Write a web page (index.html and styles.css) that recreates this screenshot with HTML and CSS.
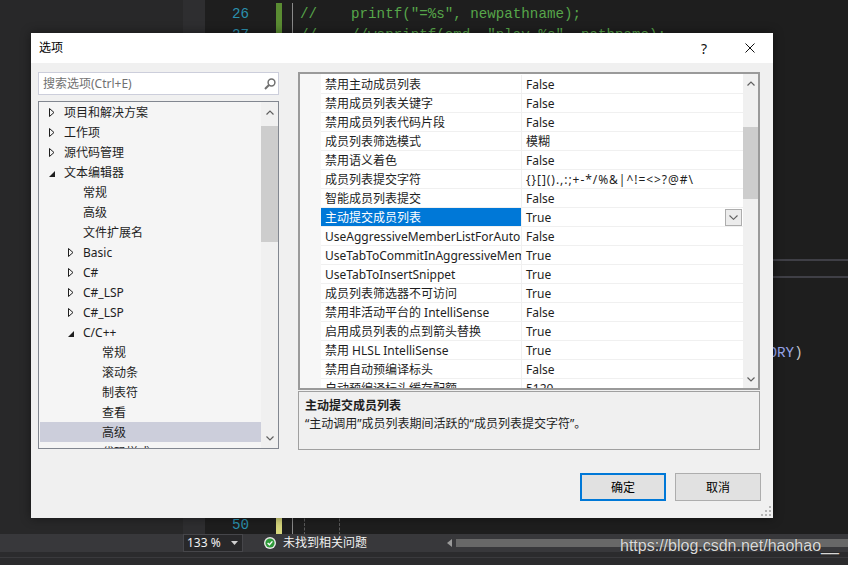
FILE: index.html
```html
<!DOCTYPE html>
<html>
<head>
<meta charset="utf-8">
<link rel="stylesheet" href="styles.css">
</head>
<body>
<div class="ide">
  <div class="editor">
    <div class="side"></div>
    <div class="strip"></div>
    <div class="lines">
      <div class="row"><span class="ln">26</span><span class="chg add"></span><span class="code cm">//    printf("=%s", newpathname);</span></div>
      <div class="row"><span class="ln">27</span><span class="chg add"></span><span class="code cm">//    //wsprintf(cmd, "play %s", pathname);</span></div>
      <div class="row"><span class="ln">28</span><span class="chg"></span><span class="code"></span></div>
      <div class="row"><span class="ln">29</span><span class="chg"></span><span class="code"></span></div>
      <div class="row"><span class="ln">30</span><span class="chg"></span><span class="code"></span></div>
      <div class="row"><span class="ln">31</span><span class="chg"></span><span class="code"></span></div>
      <div class="row"><span class="ln">32</span><span class="chg"></span><span class="code"></span></div>
      <div class="row"><span class="ln">33</span><span class="chg"></span><span class="code"></span></div>
      <div class="row"><span class="ln">34</span><span class="chg"></span><span class="code"></span></div>
      <div class="row"><span class="ln">35</span><span class="chg"></span><span class="code"></span></div>
      <div class="row"><span class="ln">36</span><span class="chg"></span><span class="code"></span></div>
      <div class="row"><span class="ln">37</span><span class="chg"></span><span class="code"></span></div>
      <div class="row"><span class="ln">38</span><span class="chg"></span><span class="code band"></span></div>
      <div class="row"><span class="ln">39</span><span class="chg"></span><span class="code"></span></div>
      <div class="row"><span class="ln">40</span><span class="chg"></span><span class="code"></span></div>
      <div class="row"><span class="ln">41</span><span class="chg"></span><span class="code"></span></div>
      <div class="row"><span class="ln">42</span><span class="chg"></span><span class="code up"><span class="pad"></span><span class="mac">ORY</span><span class="pun">)</span></span></div>
      <div class="row"><span class="ln">43</span><span class="chg"></span><span class="code"></span></div>
      <div class="row"><span class="ln">44</span><span class="chg"></span><span class="code"></span></div>
      <div class="row"><span class="ln">45</span><span class="chg"></span><span class="code"></span></div>
      <div class="row"><span class="ln">46</span><span class="chg"></span><span class="code"></span></div>
      <div class="row"><span class="ln">47</span><span class="chg"></span><span class="code"></span></div>
      <div class="row"><span class="ln">48</span><span class="chg"></span><span class="code"></span></div>
      <div class="row"><span class="ln">49</span><span class="chg"></span><span class="code"></span></div>
      <div class="row"><span class="ln">50</span><span class="chg mod"></span><span class="code"><span class="guide g1"></span><span class="guide"></span></span></div>
    </div>
  </div>
  <div class="status">
    <div class="zoombox"><span class="zv">133 %</span><svg class="zarrow" width="7" height="4" viewBox="0 0 7 4"><polygon points="0,0 7,0 3.5,4" fill="#d0d0d0"/></svg></div>
    <svg class="okicon" width="12" height="12" viewBox="0 0 12 12"><circle cx="6" cy="6" r="6" fill="#e8e8e8"/><circle cx="6" cy="6" r="4.6" fill="#2f9a3a"/><polyline points="3.6,6.1 5.4,7.8 8.4,4.4" fill="none" stroke="#fff" stroke-width="1.4"/></svg>
    <span class="oktext">未找到相关问题</span>
    <div class="hscroll"><svg width="5" height="8" viewBox="0 0 5 8"><polygon points="5,0 5,8 0,4" fill="#9a9a9a"/></svg><div class="htrack"></div></div>
  </div>
  <div class="bottom"></div>
</div>

<div class="dialog">
  <div class="titlebar">
    <span class="title">选项</span>
    <span class="tbtn help">?</span>
    <span class="tbtn"><svg width="10" height="10" viewBox="0 0 10 10"><path d="M0.5 0.5 L9.5 9.5 M9.5 0.5 L0.5 9.5" stroke="#111" stroke-width="1"/></svg></span>
  </div>
  <div class="body">
    <div class="main">
      <div class="left">
        <div class="search">
          <span class="ph">搜索选项(Ctrl+E)</span>
          <svg width="12" height="12" viewBox="0 0 12 12"><circle cx="7.5" cy="4.5" r="3.4" fill="none" stroke="#717171" stroke-width="1.5"/><path d="M5.2 6.8 L1 11" stroke="#717171" stroke-width="2"/></svg>
        </div>
        <div class="tree">
          <div class="tree-rows">
            <div class="tn l0"><span class="tw"><svg width="6" height="9" viewBox="0 0 6 9"><polygon points="0.5,0.5 5,4.5 0.5,8.5" fill="none" stroke="#1e1e1e"/></svg></span><span class="tt">项目和解决方案</span></div>
            <div class="tn l0"><span class="tw"><svg width="6" height="9" viewBox="0 0 6 9"><polygon points="0.5,0.5 5,4.5 0.5,8.5" fill="none" stroke="#1e1e1e"/></svg></span><span class="tt">工作项</span></div>
            <div class="tn l0"><span class="tw"><svg width="6" height="9" viewBox="0 0 6 9"><polygon points="0.5,0.5 5,4.5 0.5,8.5" fill="none" stroke="#1e1e1e"/></svg></span><span class="tt">源代码管理</span></div>
            <div class="tn l0"><span class="tw"><svg width="6" height="9" viewBox="0 0 6 9"><polygon points="6,3 6,9 0,9" fill="#1e1e1e"/></svg></span><span class="tt">文本编辑器</span></div>
            <div class="tn l1"><span class="tw"></span><span class="tt">常规</span></div>
            <div class="tn l1"><span class="tw"></span><span class="tt">高级</span></div>
            <div class="tn l1"><span class="tw"></span><span class="tt">文件扩展名</span></div>
            <div class="tn l1"><span class="tw"><svg width="6" height="9" viewBox="0 0 6 9"><polygon points="0.5,0.5 5,4.5 0.5,8.5" fill="none" stroke="#1e1e1e"/></svg></span><span class="tt">Basic</span></div>
            <div class="tn l1"><span class="tw"><svg width="6" height="9" viewBox="0 0 6 9"><polygon points="0.5,0.5 5,4.5 0.5,8.5" fill="none" stroke="#1e1e1e"/></svg></span><span class="tt">C#</span></div>
            <div class="tn l1"><span class="tw"><svg width="6" height="9" viewBox="0 0 6 9"><polygon points="0.5,0.5 5,4.5 0.5,8.5" fill="none" stroke="#1e1e1e"/></svg></span><span class="tt">C#_LSP</span></div>
            <div class="tn l1"><span class="tw"><svg width="6" height="9" viewBox="0 0 6 9"><polygon points="0.5,0.5 5,4.5 0.5,8.5" fill="none" stroke="#1e1e1e"/></svg></span><span class="tt">C#_LSP</span></div>
            <div class="tn l1"><span class="tw"><svg width="6" height="9" viewBox="0 0 6 9"><polygon points="6,3 6,9 0,9" fill="#1e1e1e"/></svg></span><span class="tt">C/C++</span></div>
            <div class="tn l2"><span class="tw"></span><span class="tt">常规</span></div>
            <div class="tn l2"><span class="tw"></span><span class="tt">滚动条</span></div>
            <div class="tn l2"><span class="tw"></span><span class="tt">制表符</span></div>
            <div class="tn l2"><span class="tw"></span><span class="tt">查看</span></div>
            <div class="tn l2 sel"><span class="tw"></span><span class="tt">高级</span></div>
            <div class="tn l2"><span class="tw"></span><span class="tt">代码样式</span></div>
          </div>
          <div class="vs">
            <div class="vsbtn"><svg width="8" height="5" viewBox="0 0 8 5"><polyline points="0.5,4.5 4,1 7.5,4.5" fill="none" stroke="#606060" stroke-width="1.2"/></svg></div>
            <div class="vstrack"><div class="thumb tthumb"></div></div>
            <div class="vsbtn"><svg width="8" height="5" viewBox="0 0 8 5"><polyline points="0.5,0.5 4,4 7.5,0.5" fill="none" stroke="#606060" stroke-width="1.2"/></svg></div>
          </div>
        </div>
      </div>
      <div class="right">
        <div class="grid">
          <div class="gutter"></div>
          <div class="props">
            <div class="pr"><div class="pn">禁用主动成员列表</div><div class="pv">False</div></div>
            <div class="pr"><div class="pn">禁用成员列表关键字</div><div class="pv">False</div></div>
            <div class="pr"><div class="pn">禁用成员列表代码片段</div><div class="pv">False</div></div>
            <div class="pr"><div class="pn">成员列表筛选模式</div><div class="pv">模糊</div></div>
            <div class="pr"><div class="pn">禁用语义着色</div><div class="pv">False</div></div>
            <div class="pr"><div class="pn">成员列表提交字符</div><div class="pv chars">{}[]().,:;+-*/%&amp;|^!=&lt;&gt;?@#\</div></div>
            <div class="pr"><div class="pn">智能成员列表提交</div><div class="pv">False</div></div>
            <div class="pr sel"><div class="pn">主动提交成员列表</div><div class="pv"><span class="pvt">True</span><span class="dd"><svg width="9" height="5" viewBox="0 0 9 5"><polyline points="0.5,0.5 4.5,4.3 8.5,0.5" fill="none" stroke="#606060" stroke-width="1.1"/></svg></span></div></div>
            <div class="pr"><div class="pn">UseAggressiveMemberListForAuto</div><div class="pv">False</div></div>
            <div class="pr"><div class="pn">UseTabToCommitInAggressiveMem</div><div class="pv">True</div></div>
            <div class="pr"><div class="pn">UseTabToInsertSnippet</div><div class="pv">True</div></div>
            <div class="pr"><div class="pn">成员列表筛选器不可访问</div><div class="pv">True</div></div>
            <div class="pr"><div class="pn">禁用非活动平台的 IntelliSense</div><div class="pv">False</div></div>
            <div class="pr"><div class="pn">启用成员列表的点到箭头替换</div><div class="pv">True</div></div>
            <div class="pr"><div class="pn">禁用 HLSL IntelliSense</div><div class="pv">True</div></div>
            <div class="pr"><div class="pn">禁用自动预编译标头</div><div class="pv">False</div></div>
            <div class="pr"><div class="pn">自动预编译标头缓存配额</div><div class="pv">5120</div></div>
          </div>
          <div class="gvs">
            <div class="gbtn"><svg width="8" height="5" viewBox="0 0 8 5"><polyline points="0.5,4.5 4,1 7.5,4.5" fill="none" stroke="#606060" stroke-width="1.2"/></svg></div>
            <div class="vstrack"><div class="thumb gthumb"></div></div>
            <div class="gbtn"><svg width="8" height="5" viewBox="0 0 8 5"><polyline points="0.5,0.5 4,4 7.5,0.5" fill="none" stroke="#606060" stroke-width="1.2"/></svg></div>
          </div>
        </div>
        <div class="desc">
          <div class="dtitle">主动提交成员列表</div>
          <div class="dtext">“主动调用”成员列表期间活跃的“成员列表提交字符”。</div>
        </div>
      </div>
    </div>
    <div class="buttons">
      <div class="btn def">确定</div>
      <div class="btn">取消</div>
    </div>
  </div>
  <svg class="grip" width="10" height="10" viewBox="0 0 10 10"><g fill="#b5b5b5"><rect x="8" y="0" width="2" height="2"/><rect x="4" y="4" width="2" height="2"/><rect x="8" y="4" width="2" height="2"/><rect x="0" y="8" width="2" height="2"/><rect x="4" y="8" width="2" height="2"/><rect x="8" y="8" width="2" height="2"/></g></svg>
</div>

<div class="watermark">https://blog.csdn.net/haohao__</div>
</body>
</html>
```

FILE: styles.css
```css
* { box-sizing: border-box; }
html, body { margin: 0; padding: 0; }
body {
  width: 848px;
  height: 565px;
  overflow: hidden;
  position: relative;
  background: #1e1e1e;
  font-family: "Noto Sans", "Noto Sans CJK SC", sans-serif;
}

/* ---------- background IDE ---------- */
.ide { display: flex; flex-direction: column; height: 565px; }
.editor { display: flex; height: 534px; overflow: hidden; flex: none; }
.side { width: 183px; background: #282829; flex: none; }
.strip { width: 22px; background: #2e2e30; flex: none; }
.lines {
  flex: 1;
  min-width: 0;
  padding-top: 3px;
  background: #1e1e1e;
  font-family: "Liberation Mono", monospace;
  font-size: 14.2px;
}
.row { display: flex; height: 21.3px; line-height: 19.3px; }
.ln { width: 44px; flex: none; text-align: right; color: #2b91af; padding-top: 2px; }
.chg { width: 6px; margin-left: 27px; flex: none; }
.chg.add { background: #5a8c32; }
.chg.mod { background: #d6d67c; }
.code {
  flex: 1;
  min-width: 0;
  margin-left: 10px;
  padding-left: 7px;
  padding-top: 2px;
  border-left: 1px solid #8a8a8a;
  white-space: pre;
  overflow: hidden;
  color: #dcdcdc;
}
.code.up { padding-top: 0; }
.code.cm { color: #57a64a; }
.code.band { border-top: 2px solid #3f3f46; border-bottom: 2px solid #3f3f46; margin-bottom: 2px; }
.pad { display: inline-block; width: 468.6px; }
.mac { color: #98a6ec; }
.pun { color: #c8c8c8; }
.guide { display: inline-block; height: 21px; vertical-align: top; margin-top: -2px; border-left: 1px dashed #5a5a5a; }
.guide.g1 { margin-left: 4px; width: 35px; }

.status {
  height: 18px;
  flex: none;
  display: flex;
  align-items: center;
  background: #38383b;
  font-size: 12px;
  color: #f1f1f1;
}
.zoombox {
  margin-left: 183px;
  width: 60px;
  height: 18px;
  display: flex;
  align-items: center;
  justify-content: space-between;
  padding: 0 3px 0 3px;
  background: #28282a;
  border: 1px solid #46464a;
  line-height: 16px;
}
.zarrow { margin-right: 1px; }
.okicon { margin-left: 21px; flex: none; }
.oktext { margin-left: 7px; line-height: 18px; }
.hscroll {
  margin-left: auto;
  width: 401px;
  display: flex;
  align-items: center;
}
.htrack { flex: 1; margin-left: 4px; height: 8px; background: #686868; }
.bottom { height: 13px; flex: none; background: #2b2b2d; }
.bottom::before { content: ""; display: block; height: 5px; border-bottom: 1px solid #3a3a3d; }

.watermark {
  position: absolute;
  left: 620px;
  top: 536px;
  font-family: "Liberation Sans", Arial, sans-serif;
  font-size: 16px;
  line-height: 20px;
  color: rgba(236, 236, 236, 0.92);
  text-shadow: 0 0 1px rgba(0, 0, 0, 0.6);
}

/* ---------- dialog ---------- */
.dialog {
  position: absolute;
  left: 31px;
  top: 33px;
  width: 742px;
  height: 485px;
  background: #f0f0f0;
  display: flex;
  flex-direction: column;
  font-size: 12px;
  color: #1e1e1e;
  box-shadow: 0 0 10px rgba(0, 0, 0, 0.45);
}
.titlebar {
  height: 30px;
  flex: none;
  background: #fff;
  display: flex;
  align-items: center;
  padding-left: 8px;
}
.title { color: #000; font-size: 12px; line-height: 16px; }
.tbtn {
  width: 46px;
  height: 30px;
  display: flex;
  align-items: center;
  justify-content: center;
  color: #111;
}
.tbtn.help { margin-left: auto; font-size: 14px; }
.body {
  flex: 1;
  display: flex;
  flex-direction: column;
  padding: 9px 13px 0 7px;
}
.main { display: flex; gap: 19px; height: 378px; }
.left { width: 241px; flex: none; display: flex; flex-direction: column; gap: 6px; }
.search {
  height: 23px;
  flex: none;
  background: #fff;
  border: 1px solid #cccedb;
  display: flex;
  align-items: center;
  padding: 0 2px 0 4px;
  color: #717171;
}
.ph { flex: 1; line-height: 20px; }

.tree {
  height: 348px;
  flex: none;
  border: 1px solid #828790;
  background: #f5f5f5;
  display: flex;
  overflow: hidden;
}
.tree-rows { flex: 1; min-width: 0; padding-left: 1px; overflow: hidden; }
.tn { height: 20px; display: flex; align-items: center; white-space: nowrap; color: #1e1e1e; }
.tt { line-height: 16px; margin-top: 2px; }
.tn.l0 { padding-left: 9px; }
.tn.l1 { padding-left: 28px; }
.tn.l2 { padding-left: 47px; }
.tn.sel { background: #cccedb; }
.tw { width: 15px; flex: none; display: flex; align-items: center; }
.vs { width: 17px; flex: none; display: flex; flex-direction: column; background: #f0f0f0; }
.vsbtn { height: 20px; flex: none; display: flex; align-items: center; justify-content: center; }
.vstrack { flex: 1; }
.thumb { background: #cdcdcd; }
.tthumb { margin-top: 4px; height: 116px; }

.right { flex: 1; min-width: 0; display: flex; flex-direction: column; gap: 1px; }
.grid {
  height: 318px;
  flex: none;
  border: 2px solid #9a9a9a;
  background: #fff;
  display: flex;
  overflow: hidden;
}
.gutter { width: 21px; flex: none; background: #f7f7f7; }
.props { flex: 1; min-width: 0; padding-top: 1px; overflow: hidden; }
.pr { display: flex; height: 19px; border-bottom: 1px solid #f0f0f0; line-height: 16px; flex: none; }
.pn {
  width: 201px;
  flex: none;
  padding-left: 4px;
  padding-top: 2px;
  border-right: 1px solid #f0f0f0;
  white-space: nowrap;
  overflow: hidden;
}
.pv { flex: 1; min-width: 0; padding-left: 4px; padding-top: 2px; display: flex; white-space: nowrap; overflow: hidden; }
.pv.chars { letter-spacing: 0.95px; }
.pvt { flex: 1; }
.pr.sel .pn { background: #0078d7; color: #fff; }
.pr.sel .pv { padding-top: 0; align-items: center; }
.pr.sel .pvt { padding-top: 2px; }
.dd {
  width: 17px;
  height: 17px;
  margin: 0 1px 0 0;
  background: #ececec;
  border: 1px solid #adadad;
  display: flex;
  align-items: center;
  justify-content: center;
}
.gvs { width: 15px; flex: none; display: flex; flex-direction: column; background: #f0f0f0; }
.gbtn { height: 18px; flex: none; display: flex; align-items: center; justify-content: center; }
.gthumb { margin-top: 35px; height: 72px; }

.desc {
  height: 59px;
  flex: none;
  border: 1px solid #a0a0a0;
  padding: 5px 6px 3px;
  line-height: 18px;
}
.dtitle { font-weight: bold; }

.buttons { display: flex; justify-content: flex-end; gap: 9px; margin-top: 23px; margin-right: -1px; }
.btn {
  width: 86px;
  height: 28px;
  background: #e1e1e1;
  border: 1px solid #adadad;
  display: flex;
  align-items: center;
  justify-content: center;
  color: #000;
}
.btn.def { border: 2px solid #0078d7; }
.grip { position: absolute; right: 2px; bottom: 2px; }
```
